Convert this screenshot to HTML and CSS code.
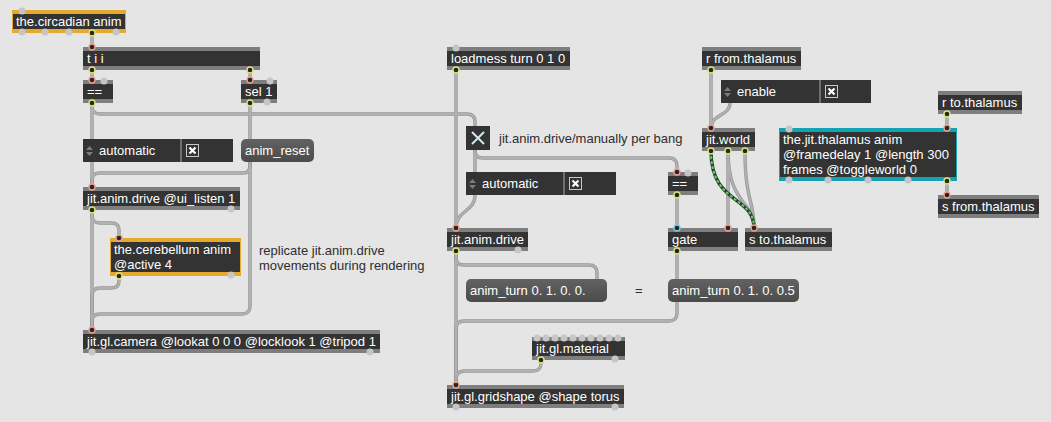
FILE: index.html
```html
<!DOCTYPE html>
<html>
<head>
  <title>the.circadian patch</title>
  <meta name="viewport" content="width=device-width, initial-scale=1.0">
  <link rel="stylesheet" href="styles.css">
</head>
<body>

  <div class="patcher">

    <!-- patch cords, drawn under the boxes -->
    <svg class="cords" width="1051" height="422">
      <defs>
        <g id="cordset">
          <path d="M92 33 V47"/>
          <path d="M92 70 V80"/>
          <path d="M250 70 V80"/>
          <path d="M92 103 V330"/>
          <path d="M92 103 V106 Q92 114 100 114 H467 Q475 114 475 122 V126"/>
          <path d="M250 103 V139"/>
          <path d="M250 162 V166 Q250 173 243 173 H100 Q92 173 92 180 V187"/>
          <path d="M250 162 V306 Q250 314 242 314 H100 Q92 314 92 322 V330"/>
          <path d="M92 210 V215 Q92 223 100 223 H111 Q119 223 119 230 V238"/>
          <path d="M119 276 V281 Q119 288 111 288 H100 Q92 288 92 296 V330"/>
          <path d="M456 70 V385"/>
          <path d="M475 150 V172"/>
          <path d="M475 150 V151 Q475 158 483 158 H669 Q677 158 677 166 V172"/>
          <path d="M475 195 C475 212 456 210 456 228"/>
          <path d="M456 251 V258 Q456 265 464 265 H589 Q597 265 597 273 V279"/>
          <path d="M677 195 V279"/>
          <path d="M677 302 V313 Q677 321 669 321 H464 Q456 321 456 329 V385"/>
          <path d="M541 360 V363 Q541 371 533 371 H465 Q456 371 456 379 V385"/>
          <path d="M711 70 V128"/>
          <path d="M730 103 C730 116 711 114 711 128"/>
          <path d="M728 151 V228"/>
          <path d="M728 151 C728 205 754 200 754 228"/>
          <path d="M745 151 C745 200 754 200 754 228"/>
          <path d="M947 114 V128"/>
          <path d="M947 181 V195"/>
        </g>
      </defs>
      <use href="#cordset" class="cord-edge"/>
      <use href="#cordset" class="cord-core"/>
      <path class="matrix-base" d="M711 151 C711 205 754 195 754 228"/>
      <path class="matrix-dash" d="M711 151 C711 205 754 195 754 228"/>
    </svg>

    <!-- left column -->
    <div class="obj bp orange" id="circ">the.circadian anim</div>
    <div class="obj" id="tii">t i i</div>
    <div class="obj" id="eq1">==</div>
    <div class="obj" id="sel">sel 1</div>

    <div class="attrui" id="au1">
      <div class="au-name"><svg class="arrows" width="7" height="12"><path d="M0 5 L3.5 1 L7 5 Z M0 7 L3.5 11 L7 7 Z"/></svg>automatic</div>
      <div class="au-value"><svg class="check" width="13" height="13"><rect x="0.5" y="0.5" width="12" height="12"/><path d="M3.5 3.5 L9.5 9.5 M9.5 3.5 L3.5 9.5"/></svg></div>
    </div>
    <div class="msg" id="reset">anim_reset</div>

    <div class="obj" id="drive1">jit.anim.drive @ui_listen 1</div>
    <div class="obj bp orange" id="cereb">the.cerebellum anim<br>@active 4</div>
    <div class="comment" id="cmt1">replicate jit.anim.drive<br>movements during rendering</div>
    <div class="obj" id="cam">jit.gl.camera @lookat 0 0 0 @locklook 1 @tripod 1</div>

    <!-- middle column -->
    <div class="obj" id="loadmess">loadmess turn 0 1 0</div>
    <div class="toggle" id="tog"><svg width="24" height="24"><path d="M6 6 L18 18 M18 6 L6 18"/></svg></div>
    <div class="comment" id="cmt2">jit.anim.drive/manually per bang</div>

    <div class="attrui" id="au2">
      <div class="au-name"><svg class="arrows" width="7" height="12"><path d="M0 5 L3.5 1 L7 5 Z M0 7 L3.5 11 L7 7 Z"/></svg>automatic</div>
      <div class="au-value"><svg class="check" width="13" height="13"><rect x="0.5" y="0.5" width="12" height="12"/><path d="M3.5 3.5 L9.5 9.5 M9.5 3.5 L3.5 9.5"/></svg></div>
    </div>
    <div class="obj" id="eq2">==</div>

    <div class="obj" id="drive2">jit.anim.drive</div>
    <div class="obj" id="gate">gate</div>
    <div class="obj" id="sto">s to.thalamus</div>

    <div class="msg" id="msg1">anim_turn 0. 1. 0. 0.</div>
    <div class="comment" id="cmt3">=</div>
    <div class="msg" id="msg2">anim_turn 0. 1. 0. 0.5</div>

    <div class="obj" id="mat">jit.gl.material</div>
    <div class="obj" id="grid">jit.gl.gridshape @shape torus</div>

    <!-- right column -->
    <div class="obj" id="rfrom">r from.thalamus</div>
    <div class="attrui" id="au3">
      <div class="au-name wide"><svg class="arrows" width="7" height="12"><path d="M0 5 L3.5 1 L7 5 Z M0 7 L3.5 11 L7 7 Z"/></svg>enable</div>
      <div class="au-value"><svg class="check" width="13" height="13"><rect x="0.5" y="0.5" width="12" height="12"/><path d="M3.5 3.5 L9.5 9.5 M9.5 3.5 L3.5 9.5"/></svg></div>
    </div>
    <div class="obj" id="world">jit.world</div>
    <div class="obj bp teal" id="thal">the.jit.thalamus anim<br>@framedelay 1 @length 300<br>frames @toggleworld 0</div>
    <div class="obj" id="rto">r to.thalamus</div>
    <div class="obj" id="sfrom">s from.thalamus</div>

    <!-- inlets and outlets, drawn over the boxes -->
    <svg class="ports" width="1051" height="422">
      <g class="free">
        <circle cx="22" cy="11" r="3.5"/>
        <circle cx="22" cy="32" r="3.5"/>
        <circle cx="45" cy="32" r="3.5"/>
        <circle cx="69" cy="32" r="3.5"/>
        <circle cx="116" cy="32" r="3.5"/>
        <circle cx="104" cy="81" r="3.5"/>
        <circle cx="270" cy="81" r="3.5"/>
        <circle cx="267" cy="102" r="3.5"/>
        <circle cx="231" cy="209" r="3.5"/>
        <circle cx="231" cy="275" r="3.5"/>
        <circle cx="92" cy="352" r="3.5"/>
        <circle cx="370" cy="352" r="3.5"/>
        <circle cx="456" cy="48" r="3.5"/>
        <circle cx="688" cy="173" r="3.5"/>
        <circle cx="518" cy="250" r="3.5"/>
        <circle cx="789" cy="129" r="3.5"/>
        <circle cx="789" cy="180" r="3.5"/>
        <circle cx="828" cy="180" r="3.5"/>
        <circle cx="868" cy="180" r="3.5"/>
        <circle cx="908" cy="180" r="3.5"/>
        <circle cx="537" cy="338" r="3.5"/>
        <circle cx="546" cy="338" r="3.5"/>
        <circle cx="555" cy="338" r="3.5"/>
        <circle cx="564" cy="338" r="3.5"/>
        <circle cx="573" cy="338" r="3.5"/>
        <circle cx="582" cy="338" r="3.5"/>
        <circle cx="591" cy="338" r="3.5"/>
        <circle cx="600" cy="338" r="3.5"/>
        <circle cx="609" cy="338" r="3.5"/>
        <circle cx="618" cy="338" r="3.5"/>
        <circle cx="615" cy="359" r="3.5"/>
        <circle cx="456" cy="407" r="3.5"/>
        <circle cx="615" cy="407" r="3.5"/>
      </g>
      <g class="inlet">
        <circle cx="92" cy="47" r="3"/>
        <circle cx="92" cy="80" r="3"/>
        <circle cx="250" cy="80" r="3"/>
        <circle cx="92" cy="187" r="3"/>
        <circle cx="119" cy="238" r="3"/>
        <circle cx="92" cy="330" r="3"/>
        <circle cx="456" cy="228" r="3"/>
        <circle cx="677" cy="172" r="3"/>
        <circle cx="728" cy="228" r="3"/>
        <circle cx="754" cy="228" r="3"/>
        <circle cx="711" cy="128" r="3"/>
        <circle cx="947" cy="128" r="3"/>
        <circle cx="456" cy="385" r="3"/>
        <circle cx="947" cy="195" r="3"/>
      </g>
      <g class="inlet ctl">
        <circle cx="677" cy="228" r="3"/>
      </g>
      <g class="outlet">
        <circle cx="92" cy="33" r="3"/>
        <circle cx="92" cy="70" r="3"/>
        <circle cx="250" cy="70" r="3"/>
        <circle cx="92" cy="103" r="3"/>
        <circle cx="250" cy="103" r="3"/>
        <circle cx="92" cy="210" r="3"/>
        <circle cx="119" cy="276" r="3"/>
        <circle cx="456" cy="70" r="3"/>
        <circle cx="456" cy="251" r="3"/>
        <circle cx="677" cy="195" r="3"/>
        <circle cx="677" cy="251" r="3"/>
        <circle cx="711" cy="70" r="3"/>
        <circle cx="711" cy="151" r="3"/>
        <circle cx="728" cy="151" r="3"/>
        <circle cx="745" cy="151" r="3"/>
        <circle cx="947" cy="114" r="3"/>
        <circle cx="947" cy="181" r="3"/>
        <circle cx="541" cy="360" r="3"/>
      </g>
    </svg>

  </div>

</body>
</html>
```

FILE: styles.css
```css
html, body {
  margin: 0;
  padding: 0;
  background: #e5e5e5;
  overflow: hidden;
  font-family: "Liberation Sans", Arial, sans-serif;
  font-size: 13px;
}

.patcher {
  position: relative;
  width: 1051px;
  height: 422px;
}

/* Cords */
.cords, .ports {
  position: absolute;
  top: 0;
  left: 0;
  pointer-events: none;
}

.cords { z-index: 0; }
.ports { z-index: 2; }

.cords path {
  fill: none;
  stroke-linecap: round;
}

.cord-edge {
  stroke: #959595;
  stroke-width: 3.4;
}

.cord-core {
  stroke: #b1b1b1;
  stroke-width: 2;
}

.cords .matrix-base {
  stroke: #2b3a2b;
  stroke-width: 3.4;
}

.cords .matrix-dash {
  stroke: #5fcf63;
  stroke-width: 2;
  stroke-dasharray: 3 2;
  stroke-linecap: butt;
}

/* Ports */
.free circle {
  fill: #c6c6c6;
}

.inlet circle, .outlet circle {
  fill: #262626;
  stroke-width: 1.4;
}

.inlet circle { stroke: #eba08f; }
.inlet.ctl circle { stroke: #7cc8e4; }
.outlet circle { stroke: #dde37a; }

/* Object boxes */
.obj {
  position: absolute;
  z-index: 1;
  box-sizing: border-box;
  height: 23px;
  padding: 0 4px;
  line-height: 15px;
  color: #fff;
  background: #333;
  border-top: 4px solid #7e7e7e;
  border-bottom: 4px solid #7e7e7e;
  white-space: nowrap;
}

.obj.bp {
  height: auto;
  border-left: 1px solid;
  border-right: 1px solid;
  padding-left: 3px;
}

.obj.orange { border-color: #e6a92b; }
.obj.teal { border-color: #14a3b3; }

/* Message boxes */
.msg {
  position: absolute;
  z-index: 1;
  box-sizing: border-box;
  height: 23px;
  padding: 0 4px;
  line-height: 23px;
  color: #fff;
  background: linear-gradient(#626262, #4b4b4b);
  border-radius: 5px;
  white-space: nowrap;
}

/* attrui */
.attrui {
  position: absolute;
  z-index: 1;
  display: flex;
  width: 150px;
  height: 23px;
  color: #fff;
  background: #333;
}

.au-name {
  display: flex;
  align-items: center;
  gap: 6px;
  width: 99px;
  padding-left: 3px;
  box-sizing: border-box;
  border-right: 2px solid #6e6e6e;
}

.au-name.wide { width: 100px; }

.arrows path { fill: #7c7c7c; }

.au-value {
  display: flex;
  align-items: center;
  padding-left: 4px;
}

.check rect {
  fill: none;
  stroke: #c9c9c9;
}

.check path {
  stroke: #fff;
  stroke-width: 2.2;
}

/* Toggle */
.toggle {
  position: absolute;
  z-index: 1;
  width: 24px;
  height: 24px;
  background: #333;
}

.toggle svg { display: block; }

.toggle path {
  stroke: #cfe9ec;
  stroke-width: 2;
}

/* Comments */
.comment {
  position: absolute;
  z-index: 1;
  line-height: 15px;
  color: #2e2e2e;
  white-space: nowrap;
}

/* Node positions */
#circ { left: 12px; top: 10px; width: 114px; }
#tii { left: 83px; top: 47px; width: 177px; }
#eq1 { left: 83px; top: 80px; width: 30px; }
#sel { left: 241px; top: 80px; width: 36px; }
#au1 { left: 83px; top: 139px; }
#reset { left: 241px; top: 139px; width: 73px; }
#drive1 { left: 83px; top: 187px; width: 157px; }
#cereb { left: 110px; top: 238px; width: 131px; }
#cmt1 { left: 259px; top: 243px; }
#cam { left: 83px; top: 330px; width: 297px; }

#loadmess { left: 447px; top: 47px; width: 123px; }
#tog { left: 466px; top: 126px; }
#cmt2 { left: 499px; top: 131px; }
#au2 { left: 466px; top: 172px; }
#eq2 { left: 668px; top: 172px; width: 30px; }
#drive2 { left: 447px; top: 228px; width: 81px; }
#gate { left: 668px; top: 228px; width: 70px; }
#sto { left: 745px; top: 228px; width: 87px; }
#msg1 { left: 466px; top: 279px; width: 141px; }
#cmt3 { left: 635px; top: 283px; }
#msg2 { left: 668px; top: 279px; width: 131px; }
#mat { left: 532px; top: 337px; width: 93px; }
#grid { left: 447px; top: 385px; width: 177px; }

#rfrom { left: 702px; top: 47px; width: 99px; }
#au3 { left: 721px; top: 80px; }
#world { left: 702px; top: 128px; width: 53px; }
#thal { left: 779px; top: 128px; width: 178px; }
#rto { left: 938px; top: 91px; width: 84px; }
#sfrom { left: 938px; top: 195px; width: 101px; }
```
